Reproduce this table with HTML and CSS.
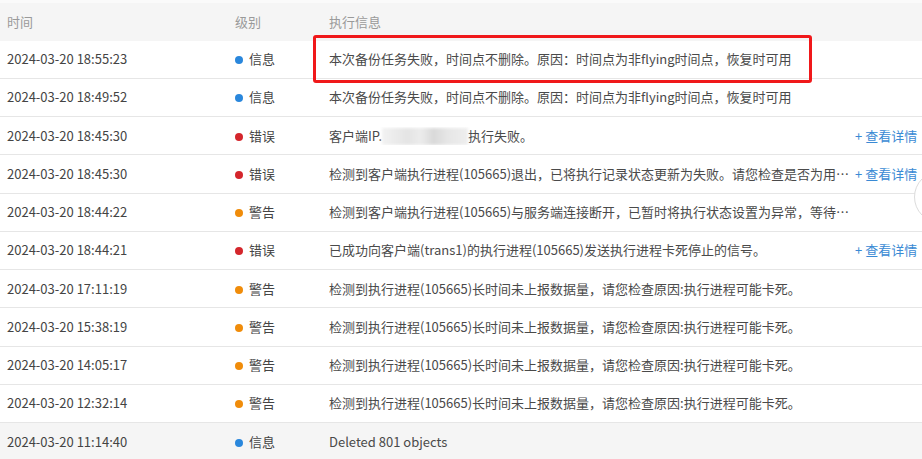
FILE: index.html
```html
<!DOCTYPE html>
<html lang="zh-CN">
<head>
<meta charset="utf-8">
<title>执行日志</title>
<link rel="stylesheet" href="styles.css">
</head>
<body>
<div class="table">
  <div class="row head">
    <div class="cell">时间</div>
    <div class="cell">级别</div>
    <div class="cell">执行信息</div>
    <div class="cell"></div>
  </div>
  <div class="row marked">
    <div class="cell">2024-03-20 18:55:23</div>
    <div class="cell"><span class="dot info"></span>信息</div>
    <div class="cell msg">本次备份任务失败，时间点不删除。原因：时间点为非flying时间点，恢复时可用</div>
    <div class="cell"></div>
    <div class="highlight"></div>
  </div>
  <div class="row">
    <div class="cell">2024-03-20 18:49:52</div>
    <div class="cell"><span class="dot info"></span>信息</div>
    <div class="cell msg">本次备份任务失败，时间点不删除。原因：时间点为非flying时间点，恢复时可用</div>
    <div class="cell"></div>
  </div>
  <div class="row">
    <div class="cell">2024-03-20 18:45:30</div>
    <div class="cell"><span class="dot error"></span>错误</div>
    <div class="cell msg">客户端IP.<span class="blur"></span>执行失败。</div>
    <div class="cell link">+ 查看详情</div>
  </div>
  <div class="row">
    <div class="cell">2024-03-20 18:45:30</div>
    <div class="cell"><span class="dot error"></span>错误</div>
    <div class="cell msg">检测到客户端执行进程(105665)退出，已将执行记录状态更新为失败。请您检查是否为用户手动终止了进程</div>
    <div class="cell link">+ 查看详情</div>
  </div>
  <div class="row">
    <div class="cell">2024-03-20 18:44:22</div>
    <div class="cell"><span class="dot warn"></span>警告</div>
    <div class="cell msg">检测到客户端执行进程(105665)与服务端连接断开，已暂时将执行状态设置为异常，等待重新连接</div>
    <div class="cell"></div>
  </div>
  <div class="row">
    <div class="cell">2024-03-20 18:44:21</div>
    <div class="cell"><span class="dot error"></span>错误</div>
    <div class="cell msg">已成功向客户端(trans1)的执行进程(105665)发送执行进程卡死停止的信号。</div>
    <div class="cell link">+ 查看详情</div>
  </div>
  <div class="row">
    <div class="cell">2024-03-20 17:11:19</div>
    <div class="cell"><span class="dot warn"></span>警告</div>
    <div class="cell msg">检测到执行进程(105665)长时间未上报数据量，请您检查原因:执行进程可能卡死。</div>
    <div class="cell"></div>
  </div>
  <div class="row">
    <div class="cell">2024-03-20 15:38:19</div>
    <div class="cell"><span class="dot warn"></span>警告</div>
    <div class="cell msg">检测到执行进程(105665)长时间未上报数据量，请您检查原因:执行进程可能卡死。</div>
    <div class="cell"></div>
  </div>
  <div class="row">
    <div class="cell">2024-03-20 14:05:17</div>
    <div class="cell"><span class="dot warn"></span>警告</div>
    <div class="cell msg">检测到执行进程(105665)长时间未上报数据量，请您检查原因:执行进程可能卡死。</div>
    <div class="cell"></div>
  </div>
  <div class="row">
    <div class="cell">2024-03-20 12:32:14</div>
    <div class="cell"><span class="dot warn"></span>警告</div>
    <div class="cell msg">检测到执行进程(105665)长时间未上报数据量，请您检查原因:执行进程可能卡死。</div>
    <div class="cell"></div>
  </div>
  <div class="row hover">
    <div class="cell">2024-03-20 11:14:40</div>
    <div class="cell"><span class="dot info"></span>信息</div>
    <div class="cell msg">Deleted 801 objects</div>
    <div class="cell"></div>
  </div>
</div>
<div class="float-btn"></div>
</body>
</html>
```
FILE: styles.css
```css
html, body {
  margin: 0;
  padding: 0;
  background: #ffffff;
  overflow: hidden;
  width: 922px;
  height: 459px;
}
body {
  font-family: "Noto Sans CJK SC", "Noto Sans", sans-serif;
  font-size: 13px;
  color: #444;
  position: relative;
}
.table {
  width: 930px;
}
.row {
  display: grid;
  grid-template-columns: 228px 94px 531px 77px;
  height: 38.25px;
  box-sizing: border-box;
  border-bottom: 1px solid #e6e6e6;
  align-items: center;
  position: relative;
}
.row.head {
  height: 40.5px;
  background: #f5f5f5;
  border-top: 3px solid #fafafa;
  border-bottom: none;
  color: #9a9a9a;
}
.row.hover {
  background: #f5f5f5;
}
.cell {
  padding-left: 7px;
  white-space: nowrap;
  overflow: hidden;
  line-height: 18px;
}
.msg {
  text-overflow: ellipsis;
  padding-right: 3px;
  color: #4a4a4a;
}
.link {
  padding-left: 2px;
  color: #3a8ad4;
  overflow: visible;
}
.dot {
  display: inline-block;
  width: 8px;
  height: 8px;
  border-radius: 50%;
  margin-right: 6px;
  vertical-align: 0px;
}
.dot.info { background: #2a87dc; }
.dot.error { background: #d4262c; }
.dot.warn { background: #f08c0a; }
.blur {
  display: inline-block;
  width: 86px;
  height: 17px;
  vertical-align: -4px;
  background: linear-gradient(90deg, #f2f2f2 0%, #e4e4e4 30%, #ececec 45%, #d9d9d9 60%, #e7e7e7 78%, #eeeeee 100%);
  filter: blur(1.5px);
}
.highlight {
  position: absolute;
  left: 313px;
  top: -5.5px;
  width: 499px;
  height: 48px;
  box-sizing: border-box;
  border: 3px solid #f0181a;
  border-radius: 3px;
  pointer-events: none;
}
.float-btn {
  position: absolute;
  left: 914px;
  top: 171px;
  width: 52px;
  height: 52px;
  border-radius: 50%;
  background: #ffffff;
  border: 1px solid #dcdcdc;
  box-sizing: border-box;
}
```
